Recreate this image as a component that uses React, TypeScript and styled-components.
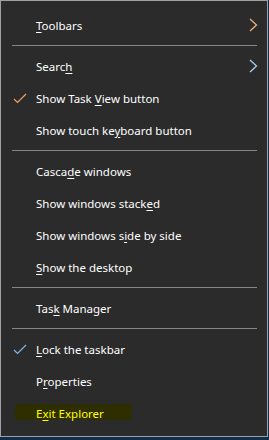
import React from 'react';
import styled, { createGlobalStyle } from 'styled-components';

const GlobalStyle = createGlobalStyle`
    html, body {
        margin: 0;
        padding: 0;
        background: #0f2f4f;
        width: 269px;
        height: 440px;
        overflow: hidden;
    }
`;

const Menu = styled.div`
    box-sizing: border-box;
    width: 268px;
    height: 437px;
    background: #2b2b2b;
    border: 1px solid #a0a0a0;
    padding: 8px 0 0 0;
    display: flex;
    flex-direction: column;
    font-family: 'Noto Sans', 'Open Sans', sans-serif;
    font-size: 11.5px;
    color: #ffffff;
`;

const Item = styled.div<{ $highlight?: boolean }>`
    position: relative;
    height: 32px;
    display: flex;
    align-items: center;
    padding-left: 35px;
    color: ${(p) => (p.$highlight ? '#ffff00' : '#ffffff')};
    &::before {
        content: '';
        display: ${(p) => (p.$highlight ? 'block' : 'none')};
        position: absolute;
        left: 14px;
        width: 117px;
        top: 7px;
        height: 16px;
        background: #2e2e00;
    }
`;

const Label = styled.span`
    position: relative;
`;

const Key = styled.span`
    text-decoration: underline;
    text-underline-offset: 2px;
`;

const Separator = styled.div`
    height: 1px;
    margin: 4px 10px 4px 11px;
    background: #858585;
`;

const Check = styled.svg`
    position: absolute;
    left: 12px;
    top: 11px;
`;

const Arrow = styled.svg`
    position: absolute;
    right: 9px;
    top: 9px;
`;

const CheckMark = ({ color }: { color: string }) => (
    <Check width="14" height="11" viewBox="0 0 14 11">
        <path d="M1 6 L4.5 9.5 L13 1" fill="none" stroke={color} strokeWidth="1.2" />
    </Check>
);

const SubArrow = ({ color }: { color: string }) => (
    <Arrow width="9" height="14" viewBox="0 0 9 14">
        <path d="M1 1 L7.5 7 L1 13" fill="none" stroke={color} strokeWidth="1.3" />
    </Arrow>
);

export default function App() {
    return (
        <>
            <GlobalStyle />
            <Menu>
                <Item>
                    <Label><Key>T</Key>oolbars</Label>
                    <SubArrow color="#e9b27a" />
                </Item>
                <Separator />
                <Item>
                    <Label>Searc<Key>h</Key></Label>
                    <SubArrow color="#a9cdf0" />
                </Item>
                <Item>
                    <CheckMark color="#e9a45c" />
                    <Label>Show Task <Key>V</Key>iew button</Label>
                </Item>
                <Item>
                    <Label>Show touch ke<Key>y</Key>board button</Label>
                </Item>
                <Separator />
                <Item>
                    <Label>Casca<Key>d</Key>e windows</Label>
                </Item>
                <Item>
                    <Label>Show windows stack<Key>e</Key>d</Label>
                </Item>
                <Item>
                    <Label>Show windows s<Key>i</Key>de by side</Label>
                </Item>
                <Item>
                    <Label><Key>S</Key>how the desktop</Label>
                </Item>
                <Separator />
                <Item>
                    <Label>Tas<Key>k</Key> Manager</Label>
                </Item>
                <Separator />
                <Item>
                    <CheckMark color="#7fb6ea" />
                    <Label><Key>L</Key>ock the taskbar</Label>
                </Item>
                <Item>
                    <Label>P<Key>r</Key>operties</Label>
                </Item>
                <Item $highlight>
                    <Label>E<Key>x</Key>it Explorer</Label>
                </Item>
            </Menu>
        </>
    );
}
